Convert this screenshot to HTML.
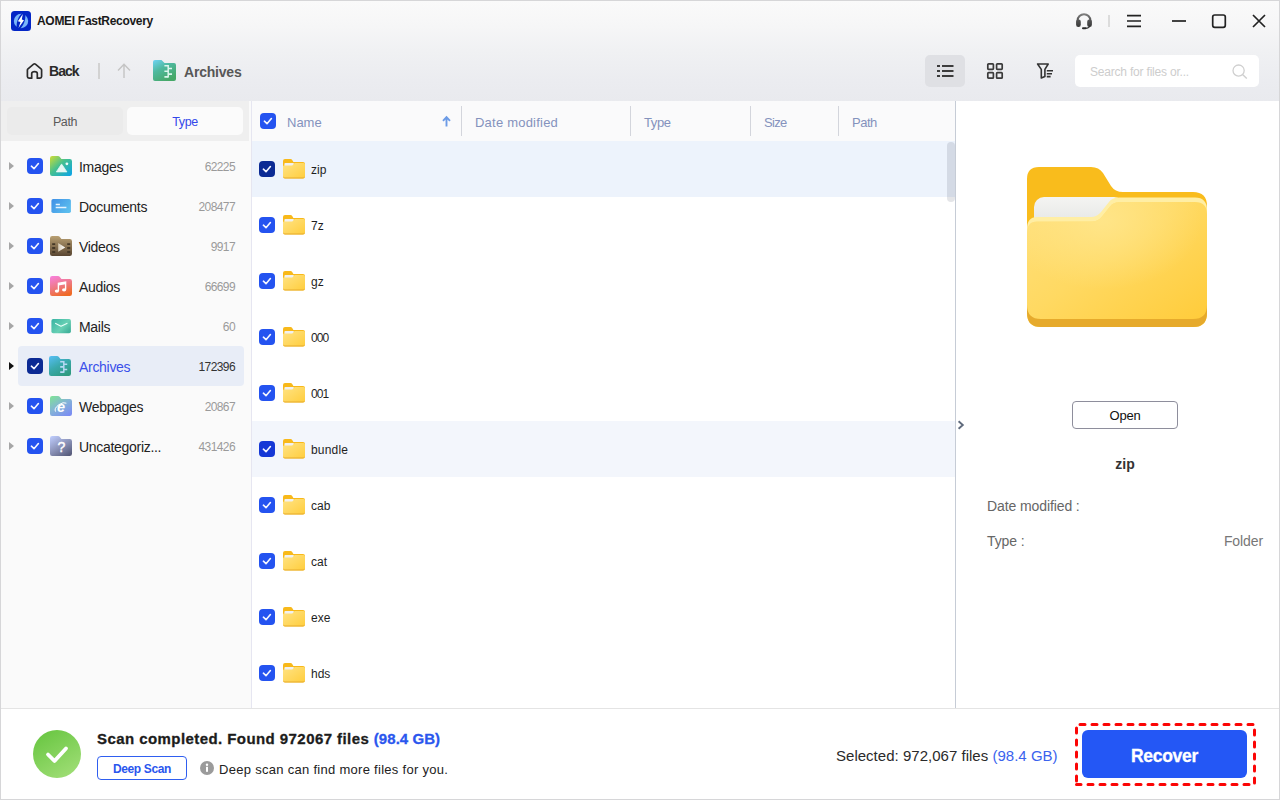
<!DOCTYPE html>
<html lang="en">
<head>
<meta charset="utf-8">
<title>AOMEI FastRecovery</title>
<style>
*{box-sizing:border-box;margin:0;padding:0}
html,body{width:1280px;height:800px;overflow:hidden;background:#fff}
body{font-family:"Liberation Sans","DejaVu Sans",sans-serif;color:#222;position:relative;font-size:13px}
.abs{position:absolute}
.t{position:absolute;white-space:nowrap;line-height:1}
svg{position:absolute;display:block;overflow:visible}
#win{position:absolute;left:0;top:0;width:1280px;height:800px;border:1px solid #d6d6d8;z-index:50;pointer-events:none}
#header{position:absolute;left:1px;top:1px;width:1278px;height:100px;background:linear-gradient(#fafafa 0,#f6f6f7 25px,#f0f1f3 50px,#ebecf0 80px,#e9eaee 100px)}
#side{position:absolute;left:1px;top:101px;width:250px;height:607px;background:#fafafa}
#tabs{position:absolute;left:0;top:0;width:248px;height:40px;background:#efefef}
.tab{position:absolute;top:6px;height:28px;border-radius:5px;text-align:center;font-size:12.5px;letter-spacing:-0.4px;line-height:30px}
#sideborder{position:absolute;left:251px;top:101px;width:1px;height:607px;background:#e6e6f1}
#table{position:absolute;left:252px;top:101px;width:703px;height:607px;background:#fff;overflow:hidden}
#thead{position:absolute;left:0;top:0;width:703px;height:40px;background:#fafafb}
.th{position:absolute;top:2px;line-height:40px;font-size:13px;color:#8492bd;white-space:nowrap}
.sep{position:absolute;top:5px;width:1px;height:30px;background:#d3d5dc}
.row{position:absolute;left:0;width:703px;height:56px}
.row.sel{background:#edf3fc}
.row.hov{background:#f3f6fc}
.row.hov .cb{background:#1538d6}
.cb{position:absolute;width:16px;height:16px;border-radius:4px;background:#2453f0}
.cb.dark{background:#0b2a94}
.cb svg{left:0;top:0}
.rname{position:absolute;left:59px;top:1px;line-height:56px;font-size:12px;color:#1f1f1f;white-space:nowrap}
#tborder{position:absolute;left:955px;top:101px;width:1px;height:607px;background:#c6ccd6}
#right{position:absolute;left:956px;top:101px;width:323px;height:607px;background:#fff}
#bottom{position:absolute;left:1px;top:708px;width:1278px;height:91px;background:#fff;border-top:1px solid #e4e4e4}
.trow{position:absolute;left:0;width:249px;height:40px}
.trow .lbl{position:absolute;left:78px;top:1px;letter-spacing:-0.3px;line-height:40px;font-size:14px;color:#222;white-space:nowrap}
.trow .cnt{position:absolute;right:15px;top:1px;line-height:40px;font-size:12px;color:#9a9a9a;white-space:nowrap;letter-spacing:-0.6px}
.trow .arr{position:absolute;left:8px;top:16px;width:0;height:0;border-left:5.5px solid #a6a6a6;border-top:4px solid transparent;border-bottom:4px solid transparent}
.trow.act .arr{border-left-color:#111}
.trow.act .lbl{color:#3a50ea}
.trow.act .cnt{color:#333}
.trow .hl{position:absolute;left:17px;top:0;width:226px;height:40px;border-radius:4px;background:#e8edf7}
.ico{position:absolute;left:48.8px;top:9.8px;width:22px;height:20px}
</style>
</head>
<body>
<div id="win"></div>
<div id="header"></div>
<div id="side">
<div id="tabs"><div class="tab" style="left:6px;width:116px;background:#ebebeb;color:#5a5a5a">Path</div><div class="tab" style="left:126px;width:116px;background:#fbfbfb;color:#3348ea">Type</div></div>
<div class="trow" style="top:45px"><div class="arr"></div><div class="cb" style="left:26px;top:12px"><svg width="16" height="16" viewBox="0 0 16 16"><path d="M4.4 8.2L7 10.7L11.4 5.5" fill="none" stroke="#f4f6ff" stroke-width="1.6" stroke-linecap="round" stroke-linejoin="round"/></svg></div><svg class="ico" viewBox="0 0 22 20"><defs><linearGradient id="gImg" x1="0" y1="0" x2="1" y2="1"><stop offset="0" stop-color="#cfdd35"/><stop offset=".45" stop-color="#45c08f"/><stop offset="1" stop-color="#08a2ec"/></linearGradient></defs><path d="M0 2.2Q0 0 2.2 0H8Q9 0 9.7 .8L11.4 3H19.8Q22 3 22 5.2V17.8Q22 20 19.8 20H2.2Q0 20 0 17.8Z" fill="url(#gImg)"/><path d="M6.3 15.9L11.2 8.6Q11.6 8.1 12 8.6L16.9 15.9Z" fill="#e6f8f4" stroke="#e6f8f4" stroke-width=".8" stroke-linejoin="round"/><circle cx="16.9" cy="7.8" r="1.4" fill="#f1fbf8"/></svg><div class="lbl">Images</div><div class="cnt">62225</div></div>
<div class="trow" style="top:85px"><div class="arr"></div><div class="cb" style="left:26px;top:12px"><svg width="16" height="16" viewBox="0 0 16 16"><path d="M4.4 8.2L7 10.7L11.4 5.5" fill="none" stroke="#f4f6ff" stroke-width="1.6" stroke-linecap="round" stroke-linejoin="round"/></svg></div><svg class="ico" viewBox="0 0 22 20"><defs><linearGradient id="gDoc" x1="0" y1="0" x2="1" y2=".6"><stop offset="0" stop-color="#3f8fe6"/><stop offset="1" stop-color="#5bbdee"/></linearGradient></defs><rect x="1.4" y="2.9" width="19.5" height="14.1" rx="1.8" fill="url(#gDoc)"/><path d="M5.7 8.6H9.9M5.7 11.6H16.4" stroke="#e4f3ff" stroke-width="1.5"/></svg><div class="lbl">Documents</div><div class="cnt">208477</div></div>
<div class="trow" style="top:125px"><div class="arr"></div><div class="cb" style="left:26px;top:12px"><svg width="16" height="16" viewBox="0 0 16 16"><path d="M4.4 8.2L7 10.7L11.4 5.5" fill="none" stroke="#f4f6ff" stroke-width="1.6" stroke-linecap="round" stroke-linejoin="round"/></svg></div><svg class="ico" viewBox="0 0 22 20"><defs><linearGradient id="gVid" x1="0" y1="0" x2="0" y2="1"><stop offset="0" stop-color="#b9a072"/><stop offset="1" stop-color="#594632"/></linearGradient><linearGradient id="gVidP" x1="0" y1="0" x2="1" y2="0"><stop offset="0" stop-color="#d6cab4"/><stop offset="1" stop-color="#ffffff"/></linearGradient></defs><path d="M0 2.2Q0 0 2.2 0H8Q9 0 9.7 .8L11.4 3H19.8Q22 3 22 5.2V17.8Q22 20 19.8 20H2.2Q0 20 0 17.8Z" fill="url(#gVid)"/><path d="M8.2 7L15.2 11.4L8.2 15.8Z" fill="url(#gVidP)"/><path d="M2.2 7.2H5.2V9.1H2.2ZM2.2 11.1H5.2V13H2.2ZM2.2 15H5.2V16.9H2.2ZM17.2 7.2H20.2V9.1H17.2ZM17.2 11.1H20.2V13H17.2ZM17.2 15H20.2V16.9H17.2Z" fill="#453827"/></svg><div class="lbl">Videos</div><div class="cnt">9917</div></div>
<div class="trow" style="top:165px"><div class="arr"></div><div class="cb" style="left:26px;top:12px"><svg width="16" height="16" viewBox="0 0 16 16"><path d="M4.4 8.2L7 10.7L11.4 5.5" fill="none" stroke="#f4f6ff" stroke-width="1.6" stroke-linecap="round" stroke-linejoin="round"/></svg></div><svg class="ico" viewBox="0 0 22 20"><defs><linearGradient id="gAud" x1=".2" y1="0" x2=".6" y2="1"><stop offset="0" stop-color="#f77fd6"/><stop offset=".5" stop-color="#ee7a86"/><stop offset="1" stop-color="#ef6a24"/></linearGradient></defs><path d="M0 2.2Q0 0 2.2 0H8Q9 0 9.7 .8L11.4 3H19.8Q22 3 22 5.2V17.8Q22 20 19.8 20H2.2Q0 20 0 17.8Z" fill="url(#gAud)"/><path d="M8.4 15V7.4L15.6 6V13.6" fill="none" stroke="#fff" stroke-width="1.4"/><path d="M8.4 7.4L15.6 6V8.2L8.4 9.6Z" fill="#fff"/><ellipse cx="6.9" cy="15.1" rx="2.1" ry="1.6" fill="#fff"/><ellipse cx="14.1" cy="13.8" rx="2.1" ry="1.6" fill="#fff"/></svg><div class="lbl">Audios</div><div class="cnt">66699</div></div>
<div class="trow" style="top:205px"><div class="arr"></div><div class="cb" style="left:26px;top:12px"><svg width="16" height="16" viewBox="0 0 16 16"><path d="M4.4 8.2L7 10.7L11.4 5.5" fill="none" stroke="#f4f6ff" stroke-width="1.6" stroke-linecap="round" stroke-linejoin="round"/></svg></div><svg class="ico" viewBox="0 0 22 20"><defs><linearGradient id="gMail" x1="0" y1="0" x2="1" y2=".7"><stop offset="0" stop-color="#38b3a3"/><stop offset=".65" stop-color="#68d0b4"/><stop offset="1" stop-color="#43b39c"/></linearGradient></defs><rect x="1.4" y="3.1" width="19.5" height="14.1" rx="1.8" fill="url(#gMail)"/><path d="M5.2 7.3L11 10.3L17.4 7.3" fill="none" stroke="#e9fff9" stroke-width="1.1" stroke-linejoin="round"/></svg><div class="lbl">Mails</div><div class="cnt">60</div></div>
<div class="trow act" style="top:245px"><div class="hl"></div><div class="arr"></div><div class="cb dark" style="left:26px;top:12px"><svg width="16" height="16" viewBox="0 0 16 16"><path d="M4.4 8.2L7 10.7L11.4 5.5" fill="none" stroke="#f4f6ff" stroke-width="1.6" stroke-linecap="round" stroke-linejoin="round"/></svg></div><svg class="ico" style="margin-left:-0.8px" viewBox="0 0 22 20"><defs><linearGradient id="gArc2" x1=".1" y1="0" x2=".7" y2="1"><stop offset="0" stop-color="#55bdf0"/><stop offset=".5" stop-color="#3aa9ad"/><stop offset="1" stop-color="#2f9a80"/></linearGradient></defs><path d="M0 2.2Q0 0 2.2 0H8Q9 0 9.7 .8L11.4 3H19.8Q22 3 22 5.2V17.8Q22 20 19.8 20H2.2Q0 20 0 17.8Z" fill="url(#gArc2)"/><path d="M14.8 5V16.8" stroke="#b6d8f3" stroke-width="1.5"/><path d="M11.2 5.7H14.8M14.8 8.3H18.2M11.2 10.9H14.8M14.8 13.5H18.2M11.2 16.1H14.8" stroke="#b6d8f3" stroke-width="1.6"/></svg><div class="lbl">Archives</div><div class="cnt">172396</div></div>
<div class="trow" style="top:285px"><div class="arr"></div><div class="cb" style="left:26px;top:12px"><svg width="16" height="16" viewBox="0 0 16 16"><path d="M4.4 8.2L7 10.7L11.4 5.5" fill="none" stroke="#f4f6ff" stroke-width="1.6" stroke-linecap="round" stroke-linejoin="round"/></svg></div><svg class="ico" viewBox="0 0 22 20"><defs><linearGradient id="gWeb" x1=".1" y1="0" x2=".8" y2="1"><stop offset="0" stop-color="#7fe09a"/><stop offset=".5" stop-color="#84b4d6"/><stop offset="1" stop-color="#7b8df2"/></linearGradient></defs><path d="M0 2.2Q0 0 2.2 0H8Q9 0 9.7 .8L11.4 3H19.8Q22 3 22 5.2V17.8Q22 20 19.8 20H2.2Q0 20 0 17.8Z" fill="url(#gWeb)"/><text x="11" y="15.6" font-family="Liberation Sans, sans-serif" font-size="14.5" font-weight="bold" font-style="italic" fill="#fff" text-anchor="middle">e</text><path d="M5.6 15.6Q3.6 12.6 9 8.6Q13.5 5.6 16.4 7.2" fill="none" stroke="#fff" stroke-width="1"/></svg><div class="lbl">Webpages</div><div class="cnt">20867</div></div>
<div class="trow" style="top:325px"><div class="arr"></div><div class="cb" style="left:26px;top:12px"><svg width="16" height="16" viewBox="0 0 16 16"><path d="M4.4 8.2L7 10.7L11.4 5.5" fill="none" stroke="#f4f6ff" stroke-width="1.6" stroke-linecap="round" stroke-linejoin="round"/></svg></div><svg class="ico" viewBox="0 0 22 20"><defs><linearGradient id="gUnc" x1=".1" y1="0" x2=".8" y2="1"><stop offset="0" stop-color="#bccafa"/><stop offset=".5" stop-color="#8e96bc"/><stop offset="1" stop-color="#595d7c"/></linearGradient></defs><path d="M0 2.2Q0 0 2.2 0H8Q9 0 9.7 .8L11.4 3H19.8Q22 3 22 5.2V17.8Q22 20 19.8 20H2.2Q0 20 0 17.8Z" fill="url(#gUnc)"/><text x="11.3" y="16.3" font-family="Liberation Sans, sans-serif" font-size="14" fill="#fff" stroke="#fff" stroke-width=".4" text-anchor="middle">?</text></svg><div class="lbl">Uncategoriz...</div><div class="cnt">431426</div></div>
</div>
<div id="sideborder"></div>
<div id="table">
<div id="thead"><div class="cb" style="left:8px;top:12px"><svg width="16" height="16" viewBox="0 0 16 16"><path d="M4.4 8.2L7 10.7L11.4 5.5" fill="none" stroke="#f4f6ff" stroke-width="1.6" stroke-linecap="round" stroke-linejoin="round"/></svg></div><div class="th" style="left:35px">Name</div><svg style="left:190px;top:15px" width="9" height="11" viewBox="0 0 9 11"><path d="M4.5 10.5V1.5M1 4.8L4.5 1.2L8 4.8" fill="none" stroke="#6c9be6" stroke-width="1.9"/></svg><div class="sep" style="left:209px"></div><div class="th" style="left:223px;letter-spacing:0.22px">Date modified</div><div class="sep" style="left:378px"></div><div class="th" style="left:392px;letter-spacing:-0.4px">Type</div><div class="sep" style="left:498px"></div><div class="th" style="left:512px;letter-spacing:-0.7px">Size</div><div class="sep" style="left:586px"></div><div class="th" style="left:600px;letter-spacing:-0.5px">Path</div></div>
<svg width="0" height="0"><defs><linearGradient id="gFold" x1="0" y1="0" x2="1" y2="1"><stop offset="0" stop-color="#ffe384"/><stop offset="1" stop-color="#ffcd3c"/></linearGradient></defs></svg>
<div class="row sel" style="top:40px"><div class="cb dark" style="left:7px;top:20px"><svg width="16" height="16" viewBox="0 0 16 16"><path d="M4.4 8.2L7 10.7L11.4 5.5" fill="none" stroke="#f4f6ff" stroke-width="1.6" stroke-linecap="round" stroke-linejoin="round"/></svg></div><svg style="left:31px;top:18px" width="22" height="20" viewBox="0 0 22 20"><path d="M0 2Q0 0 2 0H7.5Q8.6 0 9.2 1L10.4 3H20Q22 3 22 5V10H0Z" fill="#f8b91a"/><rect x="1.4" y="4" width="9.6" height="4" rx="1" fill="#f1f1f1"/><path d="M0 7.6Q0 6.6 1 6.6H8.6Q9.3 6.6 9.8 6L10.8 4.7Q11.3 4.1 12 4.1H20.5Q22 4.1 22 5.6V17.5Q22 19.5 20 19.5H2Q0 19.5 0 17.5Z" fill="url(#gFold)"/><path d="M0 17V17.5Q0 19.5 2 19.5H20Q22 19.5 22 17.5V17Q22 18.6 20 18.6H2Q0 18.6 0 17Z" fill="#e8ac2c"/></svg><div class="rname">zip</div></div>
<div class="row" style="top:96px"><div class="cb" style="left:7px;top:20px"><svg width="16" height="16" viewBox="0 0 16 16"><path d="M4.4 8.2L7 10.7L11.4 5.5" fill="none" stroke="#f4f6ff" stroke-width="1.6" stroke-linecap="round" stroke-linejoin="round"/></svg></div><svg style="left:31px;top:18px" width="22" height="20" viewBox="0 0 22 20"><path d="M0 2Q0 0 2 0H7.5Q8.6 0 9.2 1L10.4 3H20Q22 3 22 5V10H0Z" fill="#f8b91a"/><rect x="1.4" y="4" width="9.6" height="4" rx="1" fill="#f1f1f1"/><path d="M0 7.6Q0 6.6 1 6.6H8.6Q9.3 6.6 9.8 6L10.8 4.7Q11.3 4.1 12 4.1H20.5Q22 4.1 22 5.6V17.5Q22 19.5 20 19.5H2Q0 19.5 0 17.5Z" fill="url(#gFold)"/><path d="M0 17V17.5Q0 19.5 2 19.5H20Q22 19.5 22 17.5V17Q22 18.6 20 18.6H2Q0 18.6 0 17Z" fill="#e8ac2c"/></svg><div class="rname">7z</div></div>
<div class="row" style="top:152px"><div class="cb" style="left:7px;top:20px"><svg width="16" height="16" viewBox="0 0 16 16"><path d="M4.4 8.2L7 10.7L11.4 5.5" fill="none" stroke="#f4f6ff" stroke-width="1.6" stroke-linecap="round" stroke-linejoin="round"/></svg></div><svg style="left:31px;top:18px" width="22" height="20" viewBox="0 0 22 20"><path d="M0 2Q0 0 2 0H7.5Q8.6 0 9.2 1L10.4 3H20Q22 3 22 5V10H0Z" fill="#f8b91a"/><rect x="1.4" y="4" width="9.6" height="4" rx="1" fill="#f1f1f1"/><path d="M0 7.6Q0 6.6 1 6.6H8.6Q9.3 6.6 9.8 6L10.8 4.7Q11.3 4.1 12 4.1H20.5Q22 4.1 22 5.6V17.5Q22 19.5 20 19.5H2Q0 19.5 0 17.5Z" fill="url(#gFold)"/><path d="M0 17V17.5Q0 19.5 2 19.5H20Q22 19.5 22 17.5V17Q22 18.6 20 18.6H2Q0 18.6 0 17Z" fill="#e8ac2c"/></svg><div class="rname">gz</div></div>
<div class="row" style="top:208px"><div class="cb" style="left:7px;top:20px"><svg width="16" height="16" viewBox="0 0 16 16"><path d="M4.4 8.2L7 10.7L11.4 5.5" fill="none" stroke="#f4f6ff" stroke-width="1.6" stroke-linecap="round" stroke-linejoin="round"/></svg></div><svg style="left:31px;top:18px" width="22" height="20" viewBox="0 0 22 20"><path d="M0 2Q0 0 2 0H7.5Q8.6 0 9.2 1L10.4 3H20Q22 3 22 5V10H0Z" fill="#f8b91a"/><rect x="1.4" y="4" width="9.6" height="4" rx="1" fill="#f1f1f1"/><path d="M0 7.6Q0 6.6 1 6.6H8.6Q9.3 6.6 9.8 6L10.8 4.7Q11.3 4.1 12 4.1H20.5Q22 4.1 22 5.6V17.5Q22 19.5 20 19.5H2Q0 19.5 0 17.5Z" fill="url(#gFold)"/><path d="M0 17V17.5Q0 19.5 2 19.5H20Q22 19.5 22 17.5V17Q22 18.6 20 18.6H2Q0 18.6 0 17Z" fill="#e8ac2c"/></svg><div class="rname" style="letter-spacing:-0.9px">000</div></div>
<div class="row" style="top:264px"><div class="cb" style="left:7px;top:20px"><svg width="16" height="16" viewBox="0 0 16 16"><path d="M4.4 8.2L7 10.7L11.4 5.5" fill="none" stroke="#f4f6ff" stroke-width="1.6" stroke-linecap="round" stroke-linejoin="round"/></svg></div><svg style="left:31px;top:18px" width="22" height="20" viewBox="0 0 22 20"><path d="M0 2Q0 0 2 0H7.5Q8.6 0 9.2 1L10.4 3H20Q22 3 22 5V10H0Z" fill="#f8b91a"/><rect x="1.4" y="4" width="9.6" height="4" rx="1" fill="#f1f1f1"/><path d="M0 7.6Q0 6.6 1 6.6H8.6Q9.3 6.6 9.8 6L10.8 4.7Q11.3 4.1 12 4.1H20.5Q22 4.1 22 5.6V17.5Q22 19.5 20 19.5H2Q0 19.5 0 17.5Z" fill="url(#gFold)"/><path d="M0 17V17.5Q0 19.5 2 19.5H20Q22 19.5 22 17.5V17Q22 18.6 20 18.6H2Q0 18.6 0 17Z" fill="#e8ac2c"/></svg><div class="rname" style="letter-spacing:-0.9px">001</div></div>
<div class="row hov" style="top:320px"><div class="cb" style="left:7px;top:20px"><svg width="16" height="16" viewBox="0 0 16 16"><path d="M4.4 8.2L7 10.7L11.4 5.5" fill="none" stroke="#f4f6ff" stroke-width="1.6" stroke-linecap="round" stroke-linejoin="round"/></svg></div><svg style="left:31px;top:18px" width="22" height="20" viewBox="0 0 22 20"><path d="M0 2Q0 0 2 0H7.5Q8.6 0 9.2 1L10.4 3H20Q22 3 22 5V10H0Z" fill="#f8b91a"/><rect x="1.4" y="4" width="9.6" height="4" rx="1" fill="#f1f1f1"/><path d="M0 7.6Q0 6.6 1 6.6H8.6Q9.3 6.6 9.8 6L10.8 4.7Q11.3 4.1 12 4.1H20.5Q22 4.1 22 5.6V17.5Q22 19.5 20 19.5H2Q0 19.5 0 17.5Z" fill="url(#gFold)"/><path d="M0 17V17.5Q0 19.5 2 19.5H20Q22 19.5 22 17.5V17Q22 18.6 20 18.6H2Q0 18.6 0 17Z" fill="#e8ac2c"/></svg><div class="rname" style="letter-spacing:0.2px">bundle</div></div>
<div class="row" style="top:376px"><div class="cb" style="left:7px;top:20px"><svg width="16" height="16" viewBox="0 0 16 16"><path d="M4.4 8.2L7 10.7L11.4 5.5" fill="none" stroke="#f4f6ff" stroke-width="1.6" stroke-linecap="round" stroke-linejoin="round"/></svg></div><svg style="left:31px;top:18px" width="22" height="20" viewBox="0 0 22 20"><path d="M0 2Q0 0 2 0H7.5Q8.6 0 9.2 1L10.4 3H20Q22 3 22 5V10H0Z" fill="#f8b91a"/><rect x="1.4" y="4" width="9.6" height="4" rx="1" fill="#f1f1f1"/><path d="M0 7.6Q0 6.6 1 6.6H8.6Q9.3 6.6 9.8 6L10.8 4.7Q11.3 4.1 12 4.1H20.5Q22 4.1 22 5.6V17.5Q22 19.5 20 19.5H2Q0 19.5 0 17.5Z" fill="url(#gFold)"/><path d="M0 17V17.5Q0 19.5 2 19.5H20Q22 19.5 22 17.5V17Q22 18.6 20 18.6H2Q0 18.6 0 17Z" fill="#e8ac2c"/></svg><div class="rname">cab</div></div>
<div class="row" style="top:432px"><div class="cb" style="left:7px;top:20px"><svg width="16" height="16" viewBox="0 0 16 16"><path d="M4.4 8.2L7 10.7L11.4 5.5" fill="none" stroke="#f4f6ff" stroke-width="1.6" stroke-linecap="round" stroke-linejoin="round"/></svg></div><svg style="left:31px;top:18px" width="22" height="20" viewBox="0 0 22 20"><path d="M0 2Q0 0 2 0H7.5Q8.6 0 9.2 1L10.4 3H20Q22 3 22 5V10H0Z" fill="#f8b91a"/><rect x="1.4" y="4" width="9.6" height="4" rx="1" fill="#f1f1f1"/><path d="M0 7.6Q0 6.6 1 6.6H8.6Q9.3 6.6 9.8 6L10.8 4.7Q11.3 4.1 12 4.1H20.5Q22 4.1 22 5.6V17.5Q22 19.5 20 19.5H2Q0 19.5 0 17.5Z" fill="url(#gFold)"/><path d="M0 17V17.5Q0 19.5 2 19.5H20Q22 19.5 22 17.5V17Q22 18.6 20 18.6H2Q0 18.6 0 17Z" fill="#e8ac2c"/></svg><div class="rname">cat</div></div>
<div class="row" style="top:488px"><div class="cb" style="left:7px;top:20px"><svg width="16" height="16" viewBox="0 0 16 16"><path d="M4.4 8.2L7 10.7L11.4 5.5" fill="none" stroke="#f4f6ff" stroke-width="1.6" stroke-linecap="round" stroke-linejoin="round"/></svg></div><svg style="left:31px;top:18px" width="22" height="20" viewBox="0 0 22 20"><path d="M0 2Q0 0 2 0H7.5Q8.6 0 9.2 1L10.4 3H20Q22 3 22 5V10H0Z" fill="#f8b91a"/><rect x="1.4" y="4" width="9.6" height="4" rx="1" fill="#f1f1f1"/><path d="M0 7.6Q0 6.6 1 6.6H8.6Q9.3 6.6 9.8 6L10.8 4.7Q11.3 4.1 12 4.1H20.5Q22 4.1 22 5.6V17.5Q22 19.5 20 19.5H2Q0 19.5 0 17.5Z" fill="url(#gFold)"/><path d="M0 17V17.5Q0 19.5 2 19.5H20Q22 19.5 22 17.5V17Q22 18.6 20 18.6H2Q0 18.6 0 17Z" fill="#e8ac2c"/></svg><div class="rname">exe</div></div>
<div class="row" style="top:544px"><div class="cb" style="left:7px;top:20px"><svg width="16" height="16" viewBox="0 0 16 16"><path d="M4.4 8.2L7 10.7L11.4 5.5" fill="none" stroke="#f4f6ff" stroke-width="1.6" stroke-linecap="round" stroke-linejoin="round"/></svg></div><svg style="left:31px;top:18px" width="22" height="20" viewBox="0 0 22 20"><path d="M0 2Q0 0 2 0H7.5Q8.6 0 9.2 1L10.4 3H20Q22 3 22 5V10H0Z" fill="#f8b91a"/><rect x="1.4" y="4" width="9.6" height="4" rx="1" fill="#f1f1f1"/><path d="M0 7.6Q0 6.6 1 6.6H8.6Q9.3 6.6 9.8 6L10.8 4.7Q11.3 4.1 12 4.1H20.5Q22 4.1 22 5.6V17.5Q22 19.5 20 19.5H2Q0 19.5 0 17.5Z" fill="url(#gFold)"/><path d="M0 17V17.5Q0 19.5 2 19.5H20Q22 19.5 22 17.5V17Q22 18.6 20 18.6H2Q0 18.6 0 17Z" fill="#e8ac2c"/></svg><div class="rname">hds</div></div>
<div class="row" style="top:600px"><div class="cb" style="left:7px;top:20px"><svg width="16" height="16" viewBox="0 0 16 16"><path d="M4.4 8.2L7 10.7L11.4 5.5" fill="none" stroke="#f4f6ff" stroke-width="1.6" stroke-linecap="round" stroke-linejoin="round"/></svg></div><svg style="left:31px;top:18px" width="22" height="20" viewBox="0 0 22 20"><path d="M0 2Q0 0 2 0H7.5Q8.6 0 9.2 1L10.4 3H20Q22 3 22 5V10H0Z" fill="#f8b91a"/><rect x="1.4" y="4" width="9.6" height="4" rx="1" fill="#f1f1f1"/><path d="M0 7.6Q0 6.6 1 6.6H8.6Q9.3 6.6 9.8 6L10.8 4.7Q11.3 4.1 12 4.1H20.5Q22 4.1 22 5.6V17.5Q22 19.5 20 19.5H2Q0 19.5 0 17.5Z" fill="url(#gFold)"/><path d="M0 17V17.5Q0 19.5 2 19.5H20Q22 19.5 22 17.5V17Q22 18.6 20 18.6H2Q0 18.6 0 17Z" fill="#e8ac2c"/></svg><div class="rname">iso</div></div>
<div class="abs" style="left:695px;top:41px;width:7.5px;height:60px;border-radius:4px;background:rgba(40,45,70,0.125)"></div></div>
<div id="tborder"></div>
<div id="right"></div>
<div id="bottom"></div>

<!-- title bar -->
<svg style="left:11px;top:11px" width="20" height="20" viewBox="0 0 20 20">
  <rect x="0" y="0" width="20" height="20" rx="3.5" fill="#0426c6"/>
  <circle cx="10" cy="10" r="7.2" fill="#7ab6fa"/>
  <ellipse cx="10" cy="10" rx="3.5" ry="8.4" transform="rotate(20 10 10)" fill="#0426c6"/>
  <path d="M11.8 2.9 L6.9 10.3 L9.5 11 L7.5 17.1 L13 9.3 L10.8 8.5 Z" fill="#fff"/>
</svg>
<div class="t" id="title" style="left:37px;top:15px;font-size:12px;font-weight:bold;color:#1a1a1a;letter-spacing:-0.3px">AOMEI FastRecovery</div>

<!-- window controls -->
<svg style="left:1075px;top:12px" width="18" height="18" viewBox="0 0 18 18">
  <defs><linearGradient id="gHs" x1="0" y1="0" x2="0" y2="1" gradientUnits="userSpaceOnUse"><stop offset="0" stop-color="#8c8c8c"/><stop offset=".45" stop-color="#555"/><stop offset="1" stop-color="#2c2c2c"/></linearGradient><linearGradient id="gHs2" x1="0" y1="0" x2="0" y2="18" gradientUnits="userSpaceOnUse"><stop offset="0" stop-color="#8c8c8c"/><stop offset=".45" stop-color="#555"/><stop offset="1" stop-color="#2c2c2c"/></linearGradient></defs>
  <path d="M2.6 11.5 V8.6 A6.4 6.4 0 0 1 15.4 8.6 V11.5" fill="none" stroke="url(#gHs2)" stroke-width="2"/>
  <rect x="1.1" y="7.6" width="4.7" height="7.4" rx="2.2" fill="url(#gHs2)"/>
  <rect x="12.2" y="7.6" width="4.7" height="7.4" rx="2.2" fill="url(#gHs2)"/>
  <path d="M14.8 13.5 Q14.6 16.3 10 16.3" fill="none" stroke="#333" stroke-width="1.2"/>
  <rect x="7" y="15.3" width="4.4" height="2" rx="1" fill="#2a2a2a"/>
</svg>
<div class="abs" style="left:1108px;top:15px;width:2px;height:12px;background:#dcdcdc"></div>
<svg style="left:1127px;top:14px" width="14" height="14" viewBox="0 0 14 14">
  <path d="M0 1.6H14M0 7H14M0 12.4H14" stroke="#222" stroke-width="1.7" fill="none"/>
</svg>
<svg style="left:1172px;top:14px" width="14" height="14" viewBox="0 0 14 14">
  <path d="M0 7H14" stroke="#222" stroke-width="1.7" fill="none"/>
</svg>
<svg style="left:1212px;top:14px" width="14" height="14" viewBox="0 0 14 14">
  <rect x=".7" y="1" width="12.6" height="12.3" rx="2" fill="none" stroke="#222" stroke-width="1.7"/>
</svg>
<svg style="left:1252px;top:14px" width="14" height="14" viewBox="0 0 14 14">
  <path d="M1 1L13 13M13 1L1 13" stroke="#222" stroke-width="1.7" fill="none"/>
</svg>

<!-- toolbar -->
<svg style="left:25.5px;top:62px" width="17" height="18" viewBox="0 0 17 18">
  <path d="M1.4 8 Q1.4 7.3 2 6.8 L7.6 2.2 Q8.5 1.5 9.4 2.2 L15 6.8 Q15.6 7.3 15.6 8 V14.6 Q15.6 16.2 14 16.2 H11.3 V11.4 Q11.3 9.7 8.5 9.7 Q5.7 9.7 5.7 11.4 V16.2 H3 Q1.4 16.2 1.4 14.6 Z" fill="none" stroke="#2b2b2b" stroke-width="1.7" stroke-linejoin="round"/>
</svg>
<div class="t" id="back" style="left:49px;top:64px;font-size:14px;font-weight:bold;color:#2a2a2a;letter-spacing:-0.95px">Back</div>
<div class="abs" style="left:98px;top:63px;width:2px;height:16px;background:#d2d2d2"></div>
<svg style="left:117px;top:63px" width="14" height="16" viewBox="0 0 14 16">
  <path d="M7 15V1.5M1 7.5L7 1.3L13 7.5" stroke="#c4c4c4" stroke-width="1.4" fill="none"/>
</svg>
<svg style="left:153px;top:60px" width="24" height="22" viewBox="0 0 24 22">
  <defs><linearGradient id="gArc" x1="0" y1="0" x2="0.6" y2="1"><stop offset="0" stop-color="#6fd3f5"/><stop offset=".45" stop-color="#4fb9a0"/><stop offset="1" stop-color="#46a868"/></linearGradient></defs>
  <path d="M0 2 Q0 0 2 0 H8.5 L11.5 3 H21 Q23 3 23 5 V19 Q23 21 21 21 H2 Q0 21 0 19Z" fill="url(#gArc)"/>
  <path d="M15.2 5V17.6" stroke="#dcf6ee" stroke-width="1.5"/><path d="M11.4 5.7H15.2M15.2 8.5H19M11.4 11.3H15.2M15.2 14.1H19M11.4 16.9H15.2" stroke="#dcf6ee" stroke-width="1.6"/>
</svg>
<div class="t" id="crumb" style="left:184px;top:65px;font-size:14px;font-weight:bold;color:#575757;letter-spacing:-0.2px">Archives</div>

<div class="abs" style="left:925px;top:55px;width:40px;height:32px;border-radius:5px;background:#dfe0e4"></div>
<svg style="left:937px;top:64px" width="17" height="14" viewBox="0 0 17 14">
  <path d="M0 2H3M5 2H16.5M0 7H3M5 7H16.5M0 12H3M5 12H16.5" stroke="#3c3c3c" stroke-width="2" fill="none"/>
</svg>
<svg style="left:987px;top:63px" width="16" height="16" viewBox="0 0 16 16">
  <g fill="none" stroke="#3a3a3a" stroke-width="1.7"><rect x=".8" y=".8" width="5.6" height="5.6" rx=".8"/><rect x="9.6" y=".8" width="5.6" height="5.6" rx=".8"/><rect x=".8" y="9.6" width="5.6" height="5.6" rx=".8"/><rect x="9.6" y="9.6" width="5.6" height="5.6" rx=".8"/></g>
</svg>
<svg style="left:1036px;top:62px" width="18" height="18" viewBox="0 0 18 18">
  <path d="M1.6 2 H12.2 L8.9 7.4 V14.4 L5.3 15.9 V7.4 Z" fill="none" stroke="#333" stroke-width="1.6" stroke-linejoin="round"/>
  <path d="M10.8 8.7H17M10.8 11.7H16M10.8 14.6H14.6" stroke="#333" stroke-width="1.6"/>
</svg>
<div class="abs" style="left:1075px;top:55px;width:184px;height:32px;border-radius:5px;background:#fff"></div>
<div class="t" id="search" style="left:1090px;top:66px;font-size:12px;color:#cdcdcd;letter-spacing:-0.2px">Search for files or...</div>
<svg style="left:1232px;top:64px" width="16" height="16" viewBox="0 0 16 16">
  <circle cx="6.6" cy="6.6" r="5.6" fill="none" stroke="#cfcfcf" stroke-width="1.3"/><path d="M10.8 10.8L14.8 14.6" stroke="#cfcfcf" stroke-width="1.4"/>
</svg>


<!-- right panel -->
<svg style="left:1027px;top:167px" width="180" height="160" viewBox="0 0 180 160">
  <defs>
    <linearGradient id="gBig" x1="0" y1="0" x2="1" y2="1"><stop offset="0" stop-color="#ffe07c"/><stop offset=".45" stop-color="#ffd962"/><stop offset="1" stop-color="#ffcb38"/></linearGradient>
    <radialGradient id="gBigR" cx=".42" cy=".15" r=".55"><stop offset="0" stop-color="#ffe78f" stop-opacity=".8"/><stop offset="1" stop-color="#ffe78f" stop-opacity="0"/></radialGradient>
    <linearGradient id="gPaper" x1="0" y1="0" x2="0" y2="1"><stop offset="0" stop-color="#f4f4f2"/><stop offset="1" stop-color="#dfe1df"/></linearGradient>
  </defs>
  <path d="M0 12Q0 0 12 0H64Q72 0 76 6L84 19Q88 25 96 25H166Q180 25 180 39V90H0Z" fill="#f9bc1c"/>
  <rect x="7" y="30" width="90" height="40" rx="10" fill="url(#gPaper)"/>
  <path d="M0 62Q0 50 10 50H64Q70 50 74 45L82 35Q85 30.5 92 30.5H168Q180 30.5 180 43V146Q180 160 166 160H14Q0 160 0 146Z" fill="#ffeea4"/>
  <path d="M0 66Q0 54.5 10 54.5H65Q71 54.5 75 49.5L83 39.5Q86 35 93 35H168Q180 35 180 47V146Q180 160 166 160H14Q0 160 0 146Z" fill="url(#gBig)"/>
  <path d="M0 66Q0 54.5 10 54.5H65Q71 54.5 75 49.5L83 39.5Q86 35 93 35H168Q180 35 180 47V146Q180 160 166 160H14Q0 160 0 146Z" fill="url(#gBigR)"/>
  <path d="M0 138V146Q0 160 14 160H166Q180 160 180 146V138Q180 152 166 152H14Q0 152 0 138Z" fill="#e6aa2c"/>
</svg>
<div class="abs" style="left:1072px;top:401px;width:106px;height:28px;border:1px solid #8e8e9c;border-radius:4px;background:#fff"></div>
<div class="t" id="open" style="left:1072px;width:106px;text-align:center;top:409px;font-size:13px;color:#111;letter-spacing:-0.2px">Open</div>
<div class="t" id="zipname" style="left:1072px;width:106px;text-align:center;top:457px;font-size:14px;font-weight:bold;color:#333">zip</div>
<div class="t" id="dm" style="left:987px;top:499px;font-size:14px;color:#666;letter-spacing:-0.1px">Date modified :</div>
<div class="t" id="ty" style="left:987px;top:534px;font-size:14px;color:#666;letter-spacing:-0.1px">Type :</div>
<div class="t" id="fo" style="right:17px;top:534px;font-size:14px;color:#777;letter-spacing:-0.1px">Folder</div>
<svg style="left:957px;top:420px" width="8" height="10" viewBox="0 0 8 10"><path d="M1.6 1.2L5.8 5L1.6 8.8" fill="none" stroke="#5f6a7c" stroke-width="1.9"/></svg>

<!-- bottom bar -->
<svg style="left:33px;top:730px" width="48" height="48" viewBox="0 0 48 48">
  <defs><linearGradient id="gOk" x1=".2" y1="0" x2=".8" y2="1"><stop offset="0" stop-color="#69c642"/><stop offset="1" stop-color="#a0de76"/></linearGradient></defs>
  <circle cx="24" cy="24" r="24" fill="url(#gOk)"/>
  <path d="M15 24.5L21.5 31L33 18.5" fill="none" stroke="#fff" stroke-width="3.8" stroke-linecap="round" stroke-linejoin="round"/>
</svg>
<div class="t" id="scan" style="left:97px;top:731px;font-size:15px;font-weight:bold;color:#1c1c1c;letter-spacing:0.43px;-webkit-text-stroke:0.3px">Scan completed. Found 972067 files <span style="color:#2a56ee;letter-spacing:0.05px">(98.4 GB)</span></div>
<div class="abs" style="left:97px;top:756px;width:90px;height:24px;border:1px solid #2f5ef0;border-radius:4px;background:#fff"></div>
<div class="t" id="deep" style="left:97px;width:90px;text-align:center;top:763px;font-size:12px;font-weight:bold;color:#2a56ee;letter-spacing:-0.35px"><span>Deep Scan</span></div>
<svg style="left:200px;top:761px" width="14" height="14" viewBox="0 0 14 14"><circle cx="7" cy="7" r="7" fill="#9b9b9b"/><rect x="6" y="5.8" width="2" height="5" fill="#fff"/><circle cx="7" cy="3.7" r="1.2" fill="#fff"/></svg>
<div class="t" id="deepmsg" style="left:219px;top:763px;font-size:13px;color:#222;letter-spacing:0.29px">Deep scan can find more files for you.</div>
<div class="t" id="selinfo" style="left:836px;top:748px;font-size:15px;color:#2a2a2a;letter-spacing:0.02px">Selected: 972,067 files <span style="color:#3a63ee">(98.4 GB)</span></div>
<svg style="left:1070px;top:718px" width="192" height="74" viewBox="0 0 192 74"><g fill="none" stroke="#fb0505" stroke-width="3" stroke-linecap="round" stroke-dasharray="5 7"><path d="M6.5 6.5H184.5" stroke-dashoffset="-3.5"/><path d="M184.5 6.5V66.5" stroke-dashoffset="-5.5"/><path d="M6.5 66.5H184.5" stroke-dashoffset="-11.5"/><path d="M6.5 6.5V66.5" stroke-dashoffset="-3.5"/></g></svg>
<div class="abs" style="left:1082px;top:730px;width:165px;height:48px;border-radius:6px;background:#2457f5"></div>
<div class="t" id="recover" style="left:1082px;width:165px;text-align:center;top:748px;font-size:17.5px;font-weight:bold;color:#fff;letter-spacing:-0.3px;-webkit-text-stroke:0.3px #fff"><span>Recover</span></div>
</body>
</html>
